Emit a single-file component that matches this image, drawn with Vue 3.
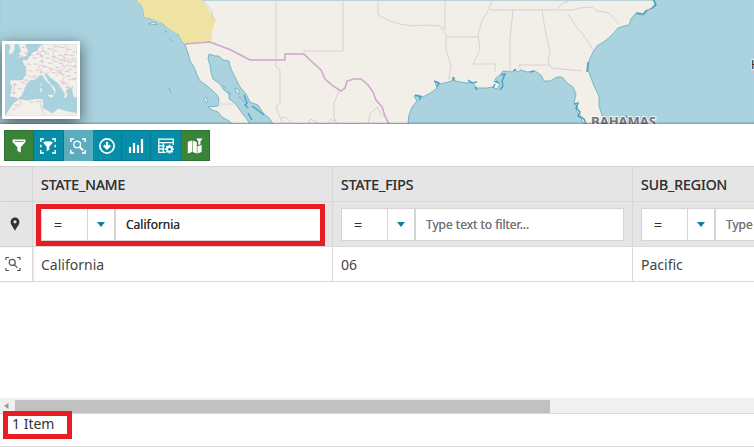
<script setup>
import { ref } from 'vue'

const columns = ref([
  { name: 'STATE_NAME', op: '=', filter: 'California', marked: true },
  { name: 'STATE_FIPS', op: '=', filter: '', marked: false },
  { name: 'SUB_REGION', op: '=', filter: '', marked: false },
])
const rows = [{ STATE_NAME: 'California', STATE_FIPS: '06', SUB_REGION: 'Pacific' }]

const tools = [
  { id: 'filter', label: 'Filter', tone: 'green' },
  { id: 'extent', label: 'Filter by map extent', tone: 'teal' },
  { id: 'zoom', label: 'Zoom to results', tone: 'muted' },
  { id: 'download', label: 'Download', tone: 'teal' },
  { id: 'chart', label: 'Charts', tone: 'teal' },
  { id: 'table', label: 'Table settings', tone: 'teal' },
  { id: 'map', label: 'Filter the map', tone: 'green' },
]

// Place-name ticks on the overview map
const places = [
  [50, 10], [58, 28], [45, 58], [72, 34], [84, 42], [96, 30], [112, 22], [128, 14], [146, 20], [166, 10],
  [186, 16], [204, 24], [66, 60], [88, 60], [104, 52], [122, 42], [140, 38], [160, 34], [180, 32], [200, 44],
  [70, 80], [92, 78], [112, 66], [130, 58], [148, 52], [168, 48], [188, 54], [206, 66], [58, 108], [84, 96],
  [106, 84], [132, 74], [152, 70], [170, 66], [190, 76], [208, 86], [26, 122], [40, 134], [20, 146], [50, 116],
  [140, 118], [166, 90], [184, 96], [202, 104], [156, 84], [170, 116], [182, 130], [74, 174], [94, 172], [30, 182],
  [88, 20], [106, 36], [150, 8], [176, 42], [196, 34], [120, 28], [162, 58], [142, 86], [180, 82], [42, 36],
]
</script>

<template>
  <main class="viewer">
    <section class="map" aria-label="Map">
      <svg class="basemap" viewBox="0 0 754 124" preserveAspectRatio="xMinYMin slice" aria-hidden="true">
        <path class="land" d="M136 0L141 5L143 9L144 17L152 19L157 20L162 23L169 29L174 31L178 34L182 41L185 45L188 53L190 61L194 67L197 75L200 81L206 85L213 91L217 95L219 99L218 106L208 107L212 110L218 112L222 117L229 121L232 124H250L246 118L242 113L237 106L235 103L229 99L229 94L224 90L220 84L213 79L211 72L210 65L208 59L209 54L215 56L219 56L223 60L229 61L230 66L232 71L236 79L240 87L246 94L250 102L258 105L263 113L269 118L273 124H408L409 115L412 107L417 101L414 96L419 95L423 97L432 92L437 88L435 82L440 84L452 81L454 77L455 81L467 83L472 82L477 88L487 88L492 87L497 89L500 84L495 79L500 75L503 71L513 72L515 69L517 72L521 70L527 72L535 71L541 75L544 81L550 81L557 77L562 77L567 83L573 87L576 94L574 103L578 107L576 111L581 116L582 121L585 124H604L602 115L599 106L599 96L594 86L590 75L588 70L589 61L593 52L597 46L605 41L612 35L618 28L624 26L629 25L631 19L635 14L643 15L645 11L652 8L655 4L653 0Z" />
        <path class="california" d="M136 0L141 5L143 9L144 17L152 19L162 23L169 29L178 34L182 41L185 44L209 42L212 39L212 31L214 24L216 20L202 0Z" />
        <path class="islands" d="M148 24l3 1l5-1l-1-2zM165 31l2 1M169 38l2 1M162 33l1 1M171 42l1-2M156 24l2 1M204 99l2 4l2-1l-2-5zM223 85l3 4M235 88l4 2v4l-3-2zM228 91l3 4M169 88l2 5M238 97l3 1M242 99l2 3" />
        <path class="shore" d="M574 104l4-1l-2 5l4 4l-2 4l6 3l2 5M501 75l4-1l-3 7l1 5l-3 4M493 88l2-4M494 81l5 2M475 87l2 3M468 80l4 3l5-1M434 81l5 2l-2 4M415 95l6 2l-2 3M588 62l-1 10M625 116l7 2M244 95l3 8l-2 2l3 3M248 113l4 7M636 13l8 1l3-4M651 9l5-4l-2-5M513 71l3-2M453 77v4M530 72l4-1M252 106l7 5l5 4" />
        <path class="state" d="M202 0L212 11L213 20M276 0V67L280 70V103L276 106L279 115L283 124M303 51H343V0M378 0V15L388 20L400 24L412 26L425 25L440 26L445 29V0M441 28L446 34V50L451 65L449 80M446 37H479M492 0L487 13L482 20L478 35L480 49L474 62L473 64H495V72M490 10H573L580 8L592 7L597 11L609 13L620 25M513 10L510 40V73M542 10L545 30L550 51L548 60L551 68L582 71M550 65H519L521 70M568 14L573 22L587 40L593 50M557 9L563 3L572 0M339 91L334 103V117L337 124M328 124L331 119L336 122M281 118L286 117L292 124M307 124L311 119L318 123M368 124L370 114L377 107L381 114L387 119M217 104H234" />
        <path class="border-line" d="M185 44L210 42L231 50L250 60H285V54H304L310 60L321 70L325 79L333 86L341 91L345 88L347 81L354 79H361L368 85L373 92L376 100L382 107L385 116L389 124" />
        <text class="country" x="591" y="126">BAHAMAS</text>
        <text class="place" x="751" y="69">H</text>
      </svg>

      <div class="overview">
        <svg viewBox="0 0 216 216" aria-hidden="true">
          <rect width="216" height="216" fill="#a9d2df" />
          <g class="overview-land">
            <path d="M10 0L30 0L29 17L22 29L12 31L11 22L16 10ZM37 0H61L66 13L70 20L65 36L55 39L36 42L45 34L39 31L47 22L44 10Z" />
            <path d="M216 0H112L105 6L97 17L84 24L72 38L67 48L54 47L52 57L63 69L62 92L52 108L16 108L15 121L21 127L14 158L28 160L38 165L50 155L59 136L65 121L76 109L91 108L103 96L112 94L120 109L137 124L148 144L143 153L149 151L153 139L148 130L131 112L119 91L123 87L134 99L148 110L160 119L169 135L179 149L177 161L183 164L188 151L183 143L188 134L198 134L203 126L201 139L205 158L216 162Z" />
            <path d="M0 216L10 199L25 178L42 164L65 169L94 164L113 165L116 180L113 192L126 198L142 207L151 201L160 193L177 199L216 207V216Z" />
            <path d="M107 115L111 117L110 128L106 126ZM105 132L112 132L111 146L106 147ZM129 151L147 153L142 163L129 156ZM191 174H204L202 177ZM77 141L84 140L81 145Z" />
          </g>
          <path class="overview-border" d="M63 92L92 104M105 92L108 77L101 68L111 62L112 45L104 30M126 88L142 79L130 70L111 68M140 56L149 39L141 20L151 0M149 39L176 52L193 47L216 55M149 77L169 81L185 63L216 72M153 98L164 85L178 98L172 112L186 118L194 134M191 107L216 104M29 117L26 154M112 0L113 20L90 34M181 0L186 21L174 40M45 164L48 183L21 199M109 166L107 187L118 216M165 108L173 121L180 119" />
          <path v-for="([x, y], i) in places" :key="i" class="tick" :d="`M${x} ${y}h7m2 1h3`" />
        </svg>
      </div>
    </section>

    <nav class="toolbar" aria-label="Table tools">
      <button v-for="tool in tools" :key="tool.id" type="button" :class="['tool', tool.tone]" :aria-label="tool.label">
        <svg viewBox="0 0 18 18" stroke-width="1.5" aria-hidden="true">
          <g v-if="tool.id === 'filter'">
            <path class="fill" d="M2.6 2.6H15.4V5L10.8 10.2V15.6L7.4 14V10.2L2.6 5Z" />
            <path d="M4.4 4.6H13.6" stroke="#398439" stroke-width="0.8" />
          </g>
          <g v-else-if="tool.id === 'extent'">
            <path class="line" d="M1.8 5V2H5M13 2H16.2V5M16.2 13V16H13M5 16H1.8V13M1.8 7.8V10.2M16.2 7.8V10.2" />
            <path class="fill" d="M4.4 4.8Q9 3.6 13.6 4.8V5.9L10.3 9.8V12.5L7.7 14.3V9.8L4.4 5.9Z" />
          </g>
          <g v-else-if="tool.id === 'zoom'">
            <path class="line" d="M1.8 5V2H5M13 2H16.2V5M16.2 13V16H13M5 16H1.8V13" />
            <circle class="line" cx="8.2" cy="7.4" r="3.3" stroke-width="1.3" />
            <path class="line" d="M10.7 10L14.1 13.4" stroke-width="2" />
          </g>
          <g v-else-if="tool.id === 'download'">
            <circle class="line" cx="9" cy="9" r="7.1" stroke-width="1.7" />
            <path class="line" d="M9 4.8V11" stroke-width="2.2" />
            <path class="line" d="M5.9 8.4L9 11.5L12.1 8.4" stroke-width="2.2" />
          </g>
          <g v-else-if="tool.id === 'chart'">
            <path class="line" d="M3 10V16M7 6V16M11 8V16M15 2V16" stroke-width="2.2" />
          </g>
          <g v-else-if="tool.id === 'table'">
            <path class="line" d="M8.5 15.3H1.8V2.2H16.2V8M1.8 5.6H16.2M2 8.8H8M2 12H7.5M6.3 5.4V15" stroke-width="1.3" />
            <path class="line" d="M12.5 7.8V16.6M8.1 12.2H16.9M9.4 9.1L15.6 15.3M15.6 9.1L9.4 15.3" stroke-width="1.8" />
            <circle class="fill" cx="12.5" cy="12.2" r="3.2" />
            <circle cx="12.5" cy="12.2" r="1.5" fill="#088da8" />
          </g>
          <g v-else>
            <path class="fill" d="M1.8 4.7L6 3.4V15.1L1.8 16.4ZM6.6 3.4L10.8 5V16.4L6.6 15.1ZM11.4 9.3L15.6 8V15.1L11.4 16.4Z" />
            <path class="fill" d="M10.2 1.5H16.6L14.4 4.5V7.2L12.3 8V4.5Z" />
          </g>
        </svg>
      </button>
    </nav>

    <section class="grid">
      <table>
        <colgroup>
          <col class="tool-col" />
          <col v-for="c in columns" :key="c.name" class="data-col" />
        </colgroup>
        <thead>
          <tr class="names">
            <td class="edge"></td>
            <th v-for="c in columns" :key="c.name" scope="col">{{ c.name }}</th>
          </tr>
          <tr class="filters">
            <td class="edge">
              <svg class="pin" viewBox="0 0 10 14" aria-hidden="true">
                <path fill="#333" fill-rule="evenodd" d="M5 .5A4.4 4.4 0 0 0 .6 4.9C.6 8 3.2 9.8 5 13.7C6.8 9.8 9.4 8 9.4 4.9A4.4 4.4 0 0 0 5 .5ZM5 3.2A1.6 1.6 0 1 1 5 6.4A1.6 1.6 0 0 1 5 3.2Z" />
              </svg>
            </td>
            <td v-for="c in columns" :key="c.name">
              <div :class="['filter', { marked: c.marked }]">
                <div class="operator">
                  <select v-model="c.op" :aria-label="`${c.name} operator`">
                    <option>=</option>
                  </select>
                  <span class="caret"></span>
                </div>
                <input v-model="c.filter" type="text" placeholder="Type text to filter..." :aria-label="`${c.name} filter`" />
              </div>
            </td>
          </tr>
        </thead>
        <tbody>
          <tr v-for="row in rows" :key="row.STATE_FIPS">
            <td class="edge">
              <button type="button" class="locate" aria-label="Zoom to feature">
                <svg viewBox="0 0 16 16" aria-hidden="true">
                  <path d="M1 4V1.5H4M12 1.5H15V4M15 12V14.5H12M4 14.5H1V12M9.6 8.8L12.4 11.8" />
                  <circle cx="7.2" cy="6.4" r="3" />
                </svg>
              </button>
            </td>
            <td v-for="c in columns" :key="c.name">{{ row[c.name] }}</td>
          </tr>
        </tbody>
      </table>
    </section>

    <div class="scrollbar" aria-hidden="true">
      <svg class="scroll-arrow" viewBox="0 0 15 15"><path d="M8.5 5V11L4 8Z" fill="#999" /></svg>
      <div class="thumb"></div>
    </div>

    <footer class="status">
      <span class="count">{{ rows.length }} Item</span>
    </footer>
  </main>
</template>

<style>
body {
  background: #fff;
}
</style>

<style scoped>
.viewer {
  display: flex;
  flex-direction: column;
  min-height: 100vh;
  overflow: hidden;
  box-sizing: border-box;
  font-family: "Noto Sans", sans-serif;
  font-size: 14px;
  color: #333;
}
.map {
  position: relative;
  height: 124px;
  background: #aad3df;
  overflow: hidden;
}
.basemap {
  display: block;
  width: 100%;
  height: 100%;
}
.map::after {
  content: "";
  position: absolute;
  inset: 0;
  box-shadow: inset 0 -2px 2px -1px rgba(0, 0, 0, 0.3);
}
.land {
  fill: #f2efe9;
  stroke: #65aabc;
  stroke-width: 0.8;
}
.california {
  fill: #eee3a2;
}
.islands {
  fill: #f2efe9;
  stroke: #58a9bf;
  stroke-width: 0.7;
}
.shore {
  fill: none;
  stroke: #49a5bf;
  stroke-width: 1.5;
}
.state {
  fill: none;
  stroke: #d9cad7;
  stroke-width: 0.9;
}
.border-line {
  fill: none;
  stroke: #cda6ca;
  stroke-width: 1.5;
}
.country {
  font-size: 13px;
  font-weight: 700;
  fill: #70757a;
  stroke: #f4f4f2;
  stroke-width: 2px;
  paint-order: stroke;
}
.place {
  font-size: 12px;
  fill: #222;
  stroke: #e8f2f4;
  stroke-width: 2px;
  paint-order: stroke;
}
.overview {
  position: absolute;
  left: 2px;
  bottom: 5px;
  width: 72px;
  height: 72px;
  border: 3px solid #fff;
  box-shadow: 0 4px 14px rgba(0, 0, 0, 0.6);
}
.overview svg {
  display: block;
}
.overview-land {
  fill: #f3efea;
  stroke: #a5c4cd;
  stroke-width: 1;
}
.overview-border {
  fill: none;
  stroke: #dcc0d8;
  stroke-width: 2;
}
.tick {
  stroke: #b5adaf;
  stroke-width: 2;
}
.toolbar {
  display: flex;
  width: 206px;
  padding: 6px 4px 5px;
}
.tool {
  display: flex;
  flex: 1;
  align-items: center;
  justify-content: center;
  height: 31px;
  padding: 0;
  border: 1px solid;
}
.tool + .tool {
  border-left: 0;
}
.tool svg {
  width: 18px;
  height: 18px;
}
.green {
  background: #398439;
  border-color: #2d702f;
}
.teal {
  background: #088da8;
  border-color: #087a92;
}
.muted {
  background: #5badbd;
  border-color: #5badbd;
}
.fill {
  fill: #fff;
}
.line {
  fill: none;
  stroke: #fff;
}
.grid {
  flex: 1;
  overflow: hidden;
}
table {
  width: 100%;
  min-width: 933px;
  table-layout: fixed;
  border-collapse: separate;
  border-spacing: 0;
  border-top: 1px solid #d5d5d5;
}
.tool-col {
  width: 33px;
}
th,
td {
  box-sizing: border-box;
  padding: 0 8px;
  border-right: 1px solid #d8d8d8;
  border-bottom: 1px solid #d8d8d8;
  text-align: left;
}
thead th,
thead td {
  background: #e5e5e5;
}
.names th {
  height: 35px;
  font-weight: 400;
  text-shadow: 0 0 0 #333;
}
.filters td {
  height: 45px;
}
tbody td {
  height: 35px;
  color: #444;
}
td.edge {
  padding: 0 6px 0 4px;
  text-align: center;
  box-shadow: 1px 0 2px rgba(0, 0, 0, 0.1);
}
.pin {
  display: block;
  width: 10px;
  height: 14px;
  margin: 0 0 0 6px;
}
.locate {
  display: block;
  width: 18px;
  height: 18px;
  padding: 1px;
  border: 0;
  background: none;
}
.locate svg {
  display: block;
  fill: none;
  stroke: #555;
  stroke-width: 1.2;
}
.filter {
  position: relative;
  display: flex;
  height: 33px;
}
.marked::after {
  content: "";
  position: absolute;
  inset: -4px -1px -5px -5px;
  border: 5px solid #e81c24;
  pointer-events: none;
}
.operator {
  position: relative;
  display: flex;
  flex: none;
  width: 73px;
}
select,
input {
  box-sizing: border-box;
  min-width: 0;
  border: 1px solid #d5d5d5;
  border-radius: 0;
  outline: 0;
  background: #fff;
  color: #333;
  font-family: inherit;
  font-size: 12px;
  font-weight: 400;
  text-shadow: 0 0 0 currentColor;
}
select {
  appearance: none;
  width: 100%;
  padding: 0 12px;
  border-right: 0;
  font-size: 14px;
}
.caret {
  position: absolute;
  top: 1px;
  right: 0;
  bottom: 1px;
  width: 26px;
  border-left: 1px solid #d5d5d5;
  display: grid;
  place-items: center;
  pointer-events: none;
}
.caret::before {
  content: "";
  border: 4px solid transparent;
  border-top: 5px solid #08809a;
  border-bottom: 0;
}
input {
  flex: 1;
  padding: 0 10px;
  border-left-width: 2px;
}
input::placeholder {
  color: #777;
  opacity: 1;
}
.scrollbar {
  display: flex;
  height: 15px;
  background: #f0f0f0;
  border-bottom: 1px solid #d9d9d9;
}
.scroll-arrow {
  flex: none;
  width: 15px;
  height: 15px;
}
.thumb {
  width: 71%;
  margin-top: 2px;
  background: #c1c1c1;
}
.status {
  display: flex;
  align-items: flex-start;
  height: 32px;
  padding-left: 3px;
  border-bottom: 1px solid #d9d9d9;
}
.count {
  box-sizing: border-box;
  width: 69px;
  height: 28px;
  margin-top: -3px;
  border: 5px solid #e81c24;
  padding-left: 4px;
  line-height: 16px;
  background: #fff;
}
</style>
